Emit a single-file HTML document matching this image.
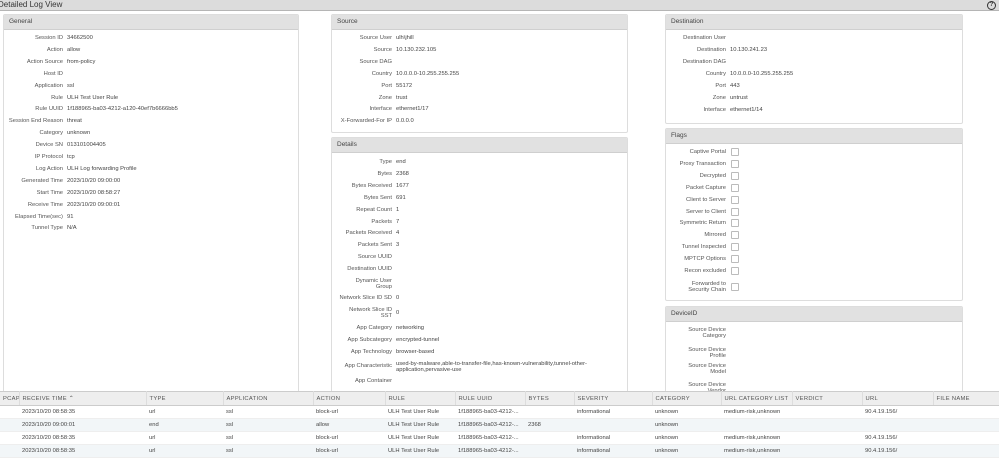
<!DOCTYPE html>
<html><head><style>
body{margin:0;width:999px;height:447px;overflow:hidden;background:#fff;font-family:"Liberation Sans",sans-serif;position:relative;color:#333}
.title{position:absolute;left:0;top:0;width:999px;height:10px;background:#dcdcdc;border-bottom:1px solid #b5b5b5;font-size:8px;line-height:10px;color:#333;padding-left:0;text-indent:-2px}
.help{position:absolute;right:3px;top:1px;width:7px;height:7px;border:1px solid #333;border-radius:50%;font-size:6px;line-height:7px;text-align:center;text-indent:0;font-weight:bold}
.p{position:absolute;border:1px solid #ddd;border-radius:2px;background:#fff;overflow:hidden}
.h{height:14px;background:#e1e1e1;border-bottom:1px solid #cfcfcf;font-size:6.5px;line-height:14px;padding-left:5px;color:#444}
.r{position:absolute;left:0;right:0;font-size:5.8px;color:#444;line-height:6px}
.l{position:absolute;text-align:right;color:#555}
.v{position:absolute;color:#444}
.cb{position:absolute;width:6px;height:6px;border:1px solid #bbb;border-radius:1px}
table{position:absolute;left:0;top:391px;width:999px;border-collapse:collapse;font-size:5.8px;color:#444;table-layout:fixed}
th{background:#eee;height:13px;text-align:left;font-weight:normal;color:#555;border-right:1px solid #ddd;border-top:1px solid #ccc;border-bottom:1px solid #ccc;padding:0 0 0 3px;letter-spacing:.3px;white-space:nowrap;overflow:hidden}
td{height:12px;padding:0 0 0 3px;border-bottom:1px solid #eee;white-space:nowrap;overflow:hidden}
tr.a td{background:#f2f6f8}
</style></head><body>
<div class="title">Detailed Log View<div class="help">?</div></div>

<div class="p" style="left:3px;top:14px;width:294px;height:380px"><div class="h">General</div></div>
<div class="p" style="left:331px;top:14px;width:295px;height:117px"><div class="h">Source</div></div>
<div class="p" style="left:331px;top:137px;width:295px;height:257px"><div class="h">Details</div></div>
<div class="p" style="left:665px;top:14px;width:296px;height:108px"><div class="h">Destination</div></div>
<div class="p" style="left:665px;top:128px;width:296px;height:171px"><div class="h">Flags</div></div>
<div class="p" style="left:665px;top:306px;width:296px;height:90px"><div class="h">DeviceID</div></div>

<script>
function add(x,lw,y,label,val,cb){
 var d=document.createElement('div');d.className='r';d.style.top=(y-3)+'px';
 var two=label.indexOf('|')>=0;
 var lab=label.replace('|','<br>');
 var l=document.createElement('div');l.className='l';l.style.left=(x-lw)+'px';l.style.width=lw+'px';l.innerHTML=lab;
 if(two){l.style.top='-3px';}
 d.appendChild(l);
 if(cb){var c=document.createElement('div');c.className='cb';c.style.left=(x+5)+'px';c.style.top='-1px';d.appendChild(c);}
 else if(val){var v=document.createElement('div');v.className='v';v.style.left=(x+4)+'px';v.innerHTML=val;d.appendChild(v);}
 document.body.appendChild(d);
}
var g=[["Session ID","34662500"],["Action","allow"],["Action Source","from-policy"],["Host ID",""],["Application","ssl"],["Rule","ULH Test User Rule"],["Rule UUID","1f188965-ba03-4212-a120-40ef7b6666bb5"],["Session End Reason","threat"],["Category","unknown"],["Device SN","013101004405"],["IP Protocol","tcp"],["Log Action","ULH Log forwarding Profile"],["Generated Time","2023/10/20 09:00:00"],["Start Time","2023/10/20 08:58:27"],["Receive Time","2023/10/20 09:00:01"],["Elapsed Time(sec)","91"],["Tunnel Type","N/A"]];
g.forEach(function(r,i){add(63,62,38+i*11.9,r[0],r[1]);});
var s=[["Source User","ulh\\jhill"],["Source","10.130.232.105"],["Source DAG",""],["Country","10.0.0.0-10.255.255.255"],["Port","55172"],["Zone","trust"],["Interface","ethernet1/17"],["X-Forwarded-For IP","0.0.0.0"]];
s.forEach(function(r,i){add(392,62,38+i*11.9,r[0],r[1]);});
var d=[[162,"Type","end"],[174,"Bytes","2368"],[186,"Bytes Received","1677"],[198,"Bytes Sent","691"],[210,"Repeat Count","1"],[222,"Packets","7"],[233,"Packets Received","4"],[245,"Packets Sent","3"],[257,"Source UUID",""],[269,"Destination UUID",""],[284,"Dynamic User|Group",""],[298,"Network Slice ID SD","0"],[313,"Network Slice ID|SST","0"],[328,"App Category","networking"],[340,"App Subcategory","encrypted-tunnel"],[352,"App Technology","browser-based"],[366,"App Characteristic",""],[381,"App Container",""]];
d.forEach(function(r){add(392,70,r[0],r[1],r[2]);});
var ch=document.createElement('div');ch.className='r';ch.style.top='361px';ch.style.left='396px';ch.style.right='auto';ch.style.width='240px';ch.innerHTML='used-by-malware,able-to-transfer-file,has-known-vulnerability,tunnel-other-<br>application,pervasive-use';document.body.appendChild(ch);
var ds=[["Destination User",""],["Destination","10.130.241.23"],["Destination DAG",""],["Country","10.0.0.0-10.255.255.255"],["Port","443"],["Zone","untrust"],["Interface","ethernet1/14"]];
ds.forEach(function(r,i){add(726,70,38+i*12,r[0],r[1]);});
var f=["Captive Portal","Proxy Transaction","Decrypted","Packet Capture","Client to Server","Server to Client","Symmetric Return","Mirrored","Tunnel Inspected","MPTCP Options","Recon excluded"];
f.forEach(function(n,i){add(726,70,152+i*11.9,n,"",true);});
add(726,70,287,"Forwarded to|Security Chain","",true);
[[333,"Source Device|Category"],[353,"Source Device|Profile"],[369,"Source Device|Model"],[388,"Source Device|Vendor"]].forEach(function(r){add(726,70,r[0],r[1],"");});
</script>

<table>
<colgroup><col style="width:19px"><col style="width:127px"><col style="width:77px"><col style="width:90px"><col style="width:72px"><col style="width:70px"><col style="width:70px"><col style="width:49px"><col style="width:78px"><col style="width:69px"><col style="width:71px"><col style="width:70px"><col style="width:71px"><col style="width:66px"></colgroup>
<tr><th>PCAP</th><th>RECEIVE TIME &#8963;</th><th>TYPE</th><th>APPLICATION</th><th>ACTION</th><th>RULE</th><th>RULE UUID</th><th>BYTES</th><th>SEVERITY</th><th>CATEGORY</th><th>URL CATEGORY LIST</th><th>VERDICT</th><th>URL</th><th>FILE NAME</th></tr>
<tr><td></td><td>2023/10/20 08:58:35</td><td>url</td><td>ssl</td><td>block-url</td><td>ULH Test User Rule</td><td>1f188965-ba03-4212-...</td><td></td><td>informational</td><td>unknown</td><td>medium-risk,unknown</td><td></td><td>90.4.19.156/</td><td></td></tr>
<tr class="a"><td></td><td>2023/10/20 09:00:01</td><td>end</td><td>ssl</td><td>allow</td><td>ULH Test User Rule</td><td>1f188965-ba03-4212-...</td><td>2368</td><td></td><td>unknown</td><td></td><td></td><td></td><td></td></tr>
<tr><td></td><td>2023/10/20 08:58:35</td><td>url</td><td>ssl</td><td>block-url</td><td>ULH Test User Rule</td><td>1f188965-ba03-4212-...</td><td></td><td>informational</td><td>unknown</td><td>medium-risk,unknown</td><td></td><td>90.4.19.156/</td><td></td></tr>
<tr class="a"><td></td><td>2023/10/20 08:58:35</td><td>url</td><td>ssl</td><td>block-url</td><td>ULH Test User Rule</td><td>1f188965-ba03-4212-...</td><td></td><td>informational</td><td>unknown</td><td>medium-risk,unknown</td><td></td><td>90.4.19.156/</td><td></td></tr>
</table>
</body></html>
